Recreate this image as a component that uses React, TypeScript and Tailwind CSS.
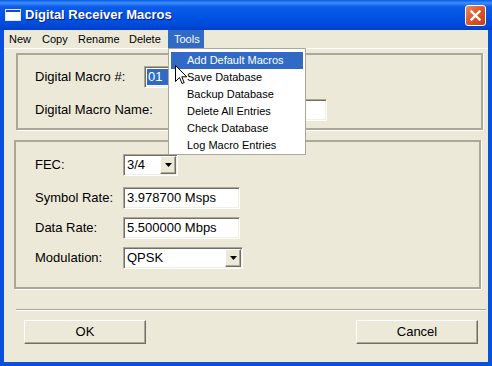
const font = "font-['Liberation_Sans',Arial,sans-serif]";

const menus = [
  { label: "New", w: "w-[33px]" },
  { label: "Copy", w: "w-[36px]" },
  { label: "Rename", w: "w-[51px]" },
  { label: "Delete", w: "w-[44px]" },
  { label: "Tools", w: "w-[36px]", open: true },
];

const toolItems = [
  "Add Default Macros",
  "Save Database",
  "Backup Database",
  "Delete All Entries",
  "Check Database",
  "Log Macro Entries",
];

const sunken =
  "border border-t-[#aca899] border-l-[#aca899] border-r-white border-b-white shadow-[inset_1px_1px_0_#716f64,inset_-1px_-1px_0_#f1efe2] bg-white";
const raised =
  "border border-t-white border-l-white border-r-[#716f64] border-b-[#716f64] shadow-[inset_-1px_-1px_0_#aca899] bg-[#ece9d8]";
const groove = "border-2 border-[#aca899] shadow-[1px_1px_0_#ffffff]";

function Arrow() {
  return (
    <div className={`${raised} w-[16px] h-[18px] flex items-center justify-center`}>
      <svg width="7" height="4" viewBox="0 0 7 4">
        <path d="M0 0h7L3.5 4z" fill="#000" />
      </svg>
    </div>
  );
}

function Combo({ value, w }: { value: string; w: string }) {
  return (
    <div className={`${sunken} ${w} h-[22px] flex items-center justify-between pl-[3px] pr-px`}>
      <span>{value}</span>
      <Arrow />
    </div>
  );
}

function Field({ value, w }: { value: string; w: string }) {
  return (
    <div className={`${sunken} ${w} h-[22px] flex items-center pl-[3px]`}>{value}</div>
  );
}

export default function App() {
  return (
    <div className={`${font} relative w-[492px] h-[366px] flex flex-col overflow-hidden text-[13px] text-black`}>
      {/* title bar */}
      <div className="h-[30px] flex items-center justify-between bg-[linear-gradient(to_bottom,#0a5ae8_0%,#3d8ffa_10%,#0d5be9_22%,#0054e3_55%,#0049da_85%,#003fc7_100%)]">
        <div className="flex items-center">
          <svg width="16" height="12" viewBox="0 0 16 12" className="ml-[5px]">
            <rect x="0.5" y="0.5" width="15" height="11" fill="#fff" stroke="#dfe7f7" />
            <rect x="1" y="1" width="14" height="2" fill="#1b45c8" />
          </svg>
          <span className="ml-[4px] font-bold text-white text-[13px] [text-shadow:1px_1px_0_#0a1c80]">
            Digital Receiver Macros
          </span>
        </div>
        <div className="mr-[6px] w-[21px] h-[21px] rounded-[3px] border border-white bg-[linear-gradient(135deg,#ec8a64_0%,#dd5a2c_45%,#c63f15_100%)] flex items-center justify-center">
          <svg width="11" height="11" viewBox="0 0 11 11">
            <path d="M1.5 1.5l8 8M9.5 1.5l-8 8" stroke="#fff" strokeWidth="2.4" strokeLinecap="square" />
          </svg>
        </div>
      </div>

      {/* window body */}
      <div className="flex-1 flex flex-col bg-[#ece9d8] border-x-4 border-b-4 border-[#0b50dc]">
        <div className="h-[18px] flex text-[11px]">
          {menus.map((m) => (
            <div
              key={m.label}
              className={`${m.w} pl-[5px] flex items-center ${m.open ? "bg-[#316ac5] text-white pl-[6px]" : ""}`}
            >
              {m.label}
            </div>
          ))}
        </div>
        <div className="h-px bg-white" />

        {/* group 1 */}
        <div className={`${groove} ml-[12px] mt-[4px] w-[467px] h-[77px] flex flex-col pl-[17px] pt-[11px]`}>
          <div className="flex items-center h-[22px]">
            <span className="w-[109px]">Digital Macro #:</span>
            <div className={`${sunken} w-[88px] h-[22px] p-[2px] flex`}>
              <div className="flex-1 bg-[#316ac5] text-white flex items-center pl-px">01</div>
            </div>
          </div>
          <div className="flex items-center h-[22px] mt-[11px]">
            <span className="w-[135px]">Digital Macro Name:</span>
            <Field value="" w="w-[157px]" />
          </div>
        </div>

        {/* group 2 */}
        <div className={`${groove} ml-[10px] mt-[10px] w-[467px] h-[149px] flex flex-col pl-[19px] pt-[12px]`}>
          <div className="flex items-center h-[22px]">
            <span className="w-[88px]">FEC:</span>
            <Combo value="3/4" w="w-[55px]" />
          </div>
          <div className="flex items-center h-[22px] mt-[11px]">
            <span className="w-[88px]">Symbol Rate:</span>
            <Field value="3.978700 Msps" w="w-[117px]" />
          </div>
          <div className="flex items-center h-[22px] mt-[8px]">
            <span className="w-[88px]">Data Rate:</span>
            <Field value="5.500000 Mbps" w="w-[117px]" />
          </div>
          <div className="flex items-center h-[22px] mt-[8px]">
            <span className="w-[88px]">Modulation:</span>
            <Combo value="QPSK" w="w-[120px]" />
          </div>
        </div>

        {/* separator */}
        <div className="ml-[12px] mt-[20px] w-[470px] h-[2px] border-t border-t-[#aca899] border-b border-b-white" />

        {/* buttons */}
        <div className="flex justify-between mt-[9px] pl-[20px] pr-[10px]">
          <div className={`${raised} w-[122px] h-[24px] flex items-center justify-center`}>OK</div>
          <div className={`${raised} w-[122px] h-[24px] flex items-center justify-center`}>Cancel</div>
        </div>
      </div>

      {/* open Tools menu */}
      <div className="absolute left-[168px] top-[48px] w-[138px] h-[107px] bg-white border border-[#aca899] pt-[3px] px-[2px] text-[11px]">
        {toolItems.map((t, i) => (
          <div
            key={t}
            className={`h-[17px] flex items-center pl-[16px] ${i === 0 ? "bg-[#316ac5] text-white" : ""}`}
          >
            {t}
          </div>
        ))}
      </div>

      {/* mouse cursor */}
      <svg width="13" height="21" viewBox="0 0 13 21" className="absolute left-[175px] top-[65px]">
        <path
          d="M0.5 0.5V16.5L4.5 12.5L7 18.5L9.2 17.6L6.8 11.8H11.8Z"
          fill="#fff"
          stroke="#000"
          strokeWidth="1"
          strokeLinejoin="miter"
        />
      </svg>
    </div>
  );
}
